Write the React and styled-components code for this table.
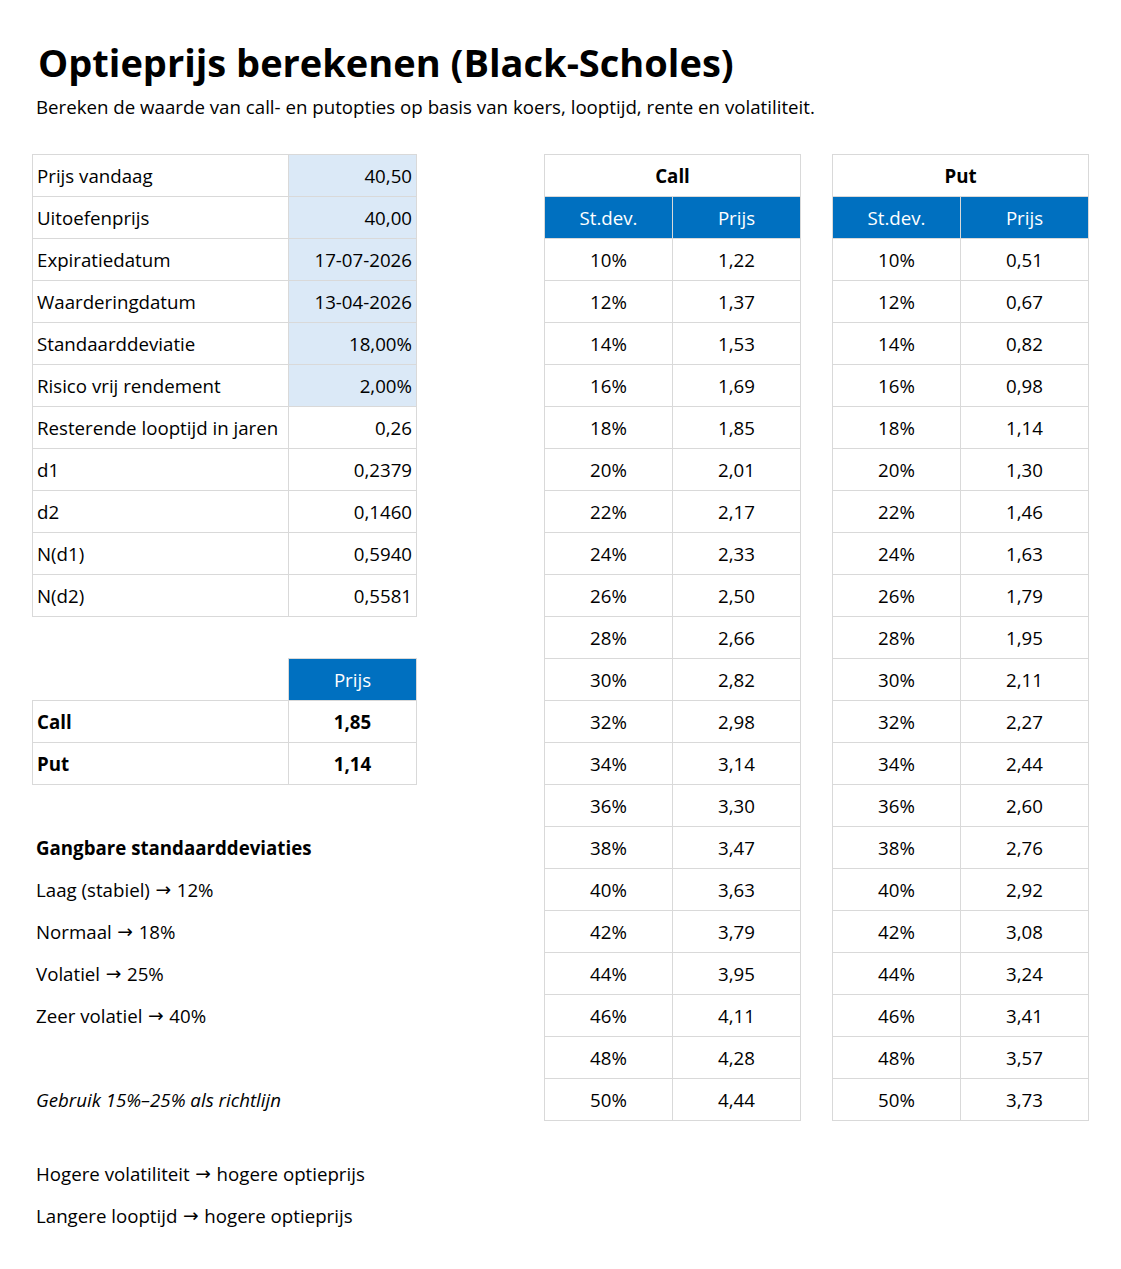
import React from "react";
import styled, { createGlobalStyle } from "styled-components";

const Global = createGlobalStyle`
  html, body { margin: 0; padding: 0; background: #fff; }
  body { font-family: "Open Sans", "Noto Sans", sans-serif; color: #000; }
`;

const BORDER = "#d9d9d9";
const BLUE = "#0070c0";
const INPUT = "#dbe9f7";
const FS = "18.7px";

const Page = styled.div`
  width: 1121px;
  padding: 39px 0 40px 32px;
  box-sizing: border-box;
`;

const Title = styled.h1`
  margin: 0;
  padding-left: 6px;
  font-size: 38px;
  line-height: 46px;
  font-weight: 700;
`;

const Subtitle = styled.p`
  margin: 9px 0 0;
  padding-left: 4px;
  font-size: ${FS};
  line-height: 26px;
`;

const Arrow = styled.span`
  font-family: "DejaVu Sans", sans-serif;
  font-size: 1em;
  font-weight: 400;
`;

const Sheet = styled.div`
  display: flex;
  align-items: flex-start;
  margin-top: 34px;
`;

const LeftCol = styled.div`
  width: 385px;
  display: flex;
  flex-direction: column;
`;

const Table = styled.table`
  border-collapse: collapse;
  table-layout: fixed;
  font-size: ${FS};
`;

const Cell = styled.td`
  height: 42px;
  padding: 0 4px;
  box-sizing: border-box;
  border: 1px solid ${BORDER};
  width: ${(p) => p.$w || 128}px;
  text-align: ${(p) => p.$align || "left"};
  font-weight: ${(p) => (p.$bold ? 700 : 400)};
  background: ${(p) => (p.$fill ? INPUT : "transparent")};
  white-space: nowrap;
`;

const EmptyCell = styled.td`
  height: 42px;
  box-sizing: border-box;
  width: ${(p) => p.$w || 128}px;
  padding: 0;
  border: none;
  border-bottom: 1px solid ${BORDER};
`;

const HeadCell = styled.th`
  height: 42px;
  padding: 0 4px;
  box-sizing: border-box;
  width: ${(p) => p.$w || 128}px;
  border: 1px solid ${BORDER};
  background: ${BLUE};
  color: #fff;
  font-weight: 400;
  text-align: center;
`;

const TitleCell = styled.th`
  height: 42px;
  padding: 0 4px;
  box-sizing: border-box;
  border: 1px solid ${BORDER};
  font-weight: 700;
  text-align: center;
`;

const Spacer = styled.div`
  height: ${(p) => p.$h || 42}px;
`;

const Line = styled.div`
  height: 42px;
  display: flex;
  align-items: center;
  gap: 0.3em;
  padding-left: 4px;
  font-size: ${FS};
  font-weight: ${(p) => (p.$bold ? 700 : 400)};
  font-style: ${(p) => (p.$italic ? "italic" : "normal")};
  white-space: pre;
`;

const RightTable = styled(Table)`
  margin-left: ${(p) => p.$ml}px;
`;

const Notes = styled.div`
  margin-top: 31px;
`;

const inputs = [
  ["Prijs vandaag", "40,50", true],
  ["Uitoefenprijs", "40,00", true],
  ["Expiratiedatum", "17-07-2026", true],
  ["Waarderingdatum", "13-04-2026", true],
  ["Standaarddeviatie", "18,00%", true],
  ["Risico vrij rendement", "2,00%", true],
  ["Resterende looptijd in jaren", "0,26", false],
  ["d1", "0,2379", false],
  ["d2", "0,1460", false],
  ["N(d1)", "0,5940", false],
  ["N(d2)", "0,5581", false],
];

const calls = ["1,22","1,37","1,53","1,69","1,85","2,01","2,17","2,33","2,50","2,66","2,82","2,98","3,14","3,30","3,47","3,63","3,79","3,95","4,11","4,28","4,44"];
const puts = ["0,51","0,67","0,82","0,98","1,14","1,30","1,46","1,63","1,79","1,95","2,11","2,27","2,44","2,60","2,76","2,92","3,08","3,24","3,41","3,57","3,73"];

function SensTable({ title, prices, ml }) {
  return (
    <RightTable $ml={ml}>
      <thead>
        <tr>
          <TitleCell colSpan={2}>{title}</TitleCell>
        </tr>
        <tr>
          <HeadCell>St.dev.</HeadCell>
          <HeadCell>Prijs</HeadCell>
        </tr>
      </thead>
      <tbody>
        {prices.map((p, i) => (
          <tr key={i}>
            <Cell $align="center">{10 + i * 2}%</Cell>
            <Cell $align="center">{p}</Cell>
          </tr>
        ))}
      </tbody>
    </RightTable>
  );
}

function ArrowLine({ left, right }) {
  return (
    <Line>
      <span>{left}</span>
      <Arrow>→</Arrow>
      <span>{right}</span>
    </Line>
  );
}

export default function App() {
  return (
    <Page>
      <Global />
      <Title>Optieprijs berekenen (Black-Scholes)</Title>
      <Subtitle>
        Bereken de waarde van call- en putopties op basis van koers, looptijd, rente en volatiliteit.
      </Subtitle>
      <Sheet>
        <LeftCol>
          <Table>
            <tbody>
              {inputs.map(([label, value, fill]) => (
                <tr key={label}>
                  <Cell $w={256}>{label}</Cell>
                  <Cell $align="right" $fill={fill}>{value}</Cell>
                </tr>
              ))}
            </tbody>
          </Table>
          <Spacer $h={41} />
          <Table>
            <tbody>
              <tr>
                <EmptyCell $w={256} />
                <HeadCell>Prijs</HeadCell>
              </tr>
              <tr>
                <Cell $w={256} $bold>Call</Cell>
                <Cell $align="center" $bold>1,85</Cell>
              </tr>
              <tr>
                <Cell $w={256} $bold>Put</Cell>
                <Cell $align="center" $bold>1,14</Cell>
              </tr>
            </tbody>
          </Table>
          <Spacer $h={41} />
          <Line $bold>Gangbare standaarddeviaties</Line>
          <ArrowLine left="Laag (stabiel)" right="12%" />
          <ArrowLine left="Normaal" right="18%" />
          <ArrowLine left="Volatiel" right="25%" />
          <ArrowLine left="Zeer volatiel" right="40%" />
          <Spacer />
          <Line $italic>Gebruik 15%–25% als richtlijn</Line>
        </LeftCol>
        <SensTable title="Call" prices={calls} ml={127} />
        <SensTable title="Put" prices={puts} ml={31} />
      </Sheet>
      <Notes>
        <ArrowLine left="Hogere volatiliteit" right="hogere optieprijs" />
        <ArrowLine left="Langere looptijd" right="hogere optieprijs" />
      </Notes>
    </Page>
  );
}
